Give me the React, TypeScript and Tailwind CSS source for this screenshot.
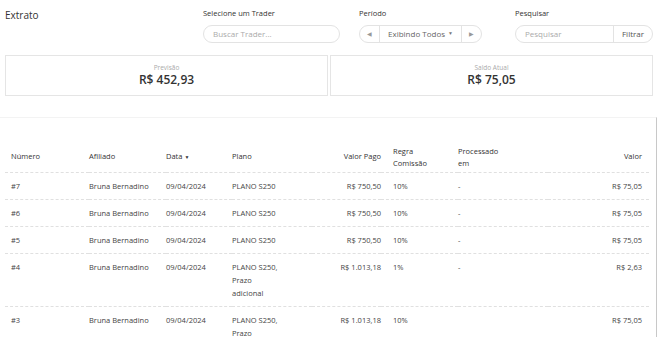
const rows = [
  { n: '#7', plano: ['PLANO S250'], pago: 'R$ 750,50', regra: '10%', proc: '-', valor: 'R$ 75,05' },
  { n: '#6', plano: ['PLANO S250'], pago: 'R$ 750,50', regra: '10%', proc: '-', valor: 'R$ 75,05' },
  { n: '#5', plano: ['PLANO S250'], pago: 'R$ 750,50', regra: '10%', proc: '-', valor: 'R$ 75,05' },
  { n: '#4', plano: ['PLANO S250,', 'Prazo', 'adicional'], pago: 'R$ 1.013,18', regra: '1%', proc: '-', valor: 'R$ 2,63' },
  { n: '#3', plano: ['PLANO S250,', 'Prazo', 'adicional'], pago: 'R$ 1.013,18', regra: '10%', proc: '', valor: 'R$ 75,05' },
];

export default function App() {
  return (
    <div
      className="w-[658px] h-[337px] overflow-hidden bg-white text-[#333]"
      style={{ fontFamily: '"Open Sans", "Noto Sans", sans-serif' }}
    >
      {/* filtros */}
      <div className="flex h-[50px] pt-[8px]">
        <div className="w-[203px] pl-[5px] text-[10px] leading-[14px] text-[#333]">Extrato</div>
        <div className="w-[156px] flex flex-col">
          <span className="text-[7.5px] leading-[10px] text-[#333]">Selecione um Trader</span>
          <div className="mt-[7px] w-[137px] h-[18px] rounded-full border border-[#e3e3e3] flex items-center px-[9px] text-[8px] text-[#aaa]">
            Buscar Trader...
          </div>
        </div>
        <div className="w-[156px] flex flex-col">
          <span className="text-[7.5px] leading-[10px] text-[#333]">Período</span>
          <div className="mt-[7px] w-[123px] h-[18px] rounded-full border border-[#e3e3e3] flex items-center text-[8px] text-[#666]">
            <div className="w-[20px] h-full flex items-center justify-center border-r border-[#e3e3e3] text-[6px] text-[#999]">◀</div>
            <div className="flex-1 h-full flex items-center justify-center gap-[3px]">
              Exibindo Todos <span className="text-[5px] text-[#777]">▼</span>
            </div>
            <div className="w-[20px] h-full flex items-center justify-center border-l border-[#e3e3e3] text-[6px] text-[#999]">▶</div>
          </div>
        </div>
        <div className="flex flex-col">
          <span className="text-[7.5px] leading-[10px] text-[#333]">Pesquisar</span>
          <div className="mt-[7px] w-[138px] h-[18px] rounded-full border border-[#e3e3e3] flex items-center text-[8px]">
            <div className="flex-1 px-[9px] text-[#aaa]">Pesquisar</div>
            <div className="h-full px-[8px] flex items-center border-l border-[#e3e3e3] text-[#555]">Filtrar</div>
          </div>
        </div>
      </div>

      {/* resumo */}
      <div className="flex gap-[2px] px-[5px] mt-[5px]">
        <div className="flex-1 h-[41px] border border-[#e5e5e5] flex flex-col items-center justify-center">
          <span className="text-[6.5px] leading-[9px] text-[#aaa]">Previsão</span>
          <span className="text-[12px] leading-[16px] font-semibold text-[#333]">R$ 452,93</span>
        </div>
        <div className="flex-1 h-[41px] border border-[#e5e5e5] flex flex-col items-center justify-center">
          <span className="text-[6.5px] leading-[9px] text-[#aaa]">Saldo Atual</span>
          <span className="text-[12px] leading-[16px] font-semibold text-[#333]">R$ 75,05</span>
        </div>
      </div>

      {/* tabela */}
      <div className="mt-[21px] w-[657px] border-t border-[#f3f3f3] border-r border-r-[#c8c8c8] pt-[24px] pl-[5px] pr-[8px] text-[7.5px] text-[#444]">
        <table className="w-[644px] border-collapse">
          <thead>
            <tr className="border-b border-dashed border-[#e0e0e0] text-[#333]">
              <th className="w-[84px] pl-[6px] h-[30px] text-left font-normal">Número</th>
              <th className="w-[77px] text-left font-normal">Afiliado</th>
              <th className="w-[66px] text-left font-normal">
                Data <span className="text-[5px]">▼</span>
              </th>
              <th className="w-[80px] text-left font-normal">Plano</th>
              <th className="w-[69px] text-right font-normal">Valor Pago</th>
              <th className="w-[77px] pl-[12px] text-left font-normal leading-[12px]">
                Regra
                <br />
                Comissão
              </th>
              <th className="w-[90px] text-left font-normal leading-[12px]">
                Processado
                <br />
                em
              </th>
              <th className="pr-[7px] text-right font-normal">Valor</th>
            </tr>
          </thead>
          <tbody>
            {rows.map((r) => (
              <tr key={r.n} className="border-b border-dashed border-[#e0e0e0] align-top">
                <td className="pl-[6px] pt-[7px] pb-[6px] leading-[13px]">{r.n}</td>
                <td className="pt-[7px] leading-[13px]">Bruna Bernadino</td>
                <td className="pt-[7px] leading-[13px]">09/04/2024</td>
                <td className="pt-[7px] pb-[6px] leading-[13px]">
                  {r.plano.map((p, i) => (
                    <div key={i}>{p}</div>
                  ))}
                </td>
                <td className="pt-[7px] text-right leading-[13px]">{r.pago}</td>
                <td className="pt-[7px] pl-[12px] leading-[13px]">{r.regra}</td>
                <td className="pt-[7px] leading-[13px]">{r.proc}</td>
                <td className="pt-[7px] pr-[7px] text-right leading-[13px]">{r.valor}</td>
              </tr>
            ))}
          </tbody>
        </table>
      </div>
    </div>
  );
}
